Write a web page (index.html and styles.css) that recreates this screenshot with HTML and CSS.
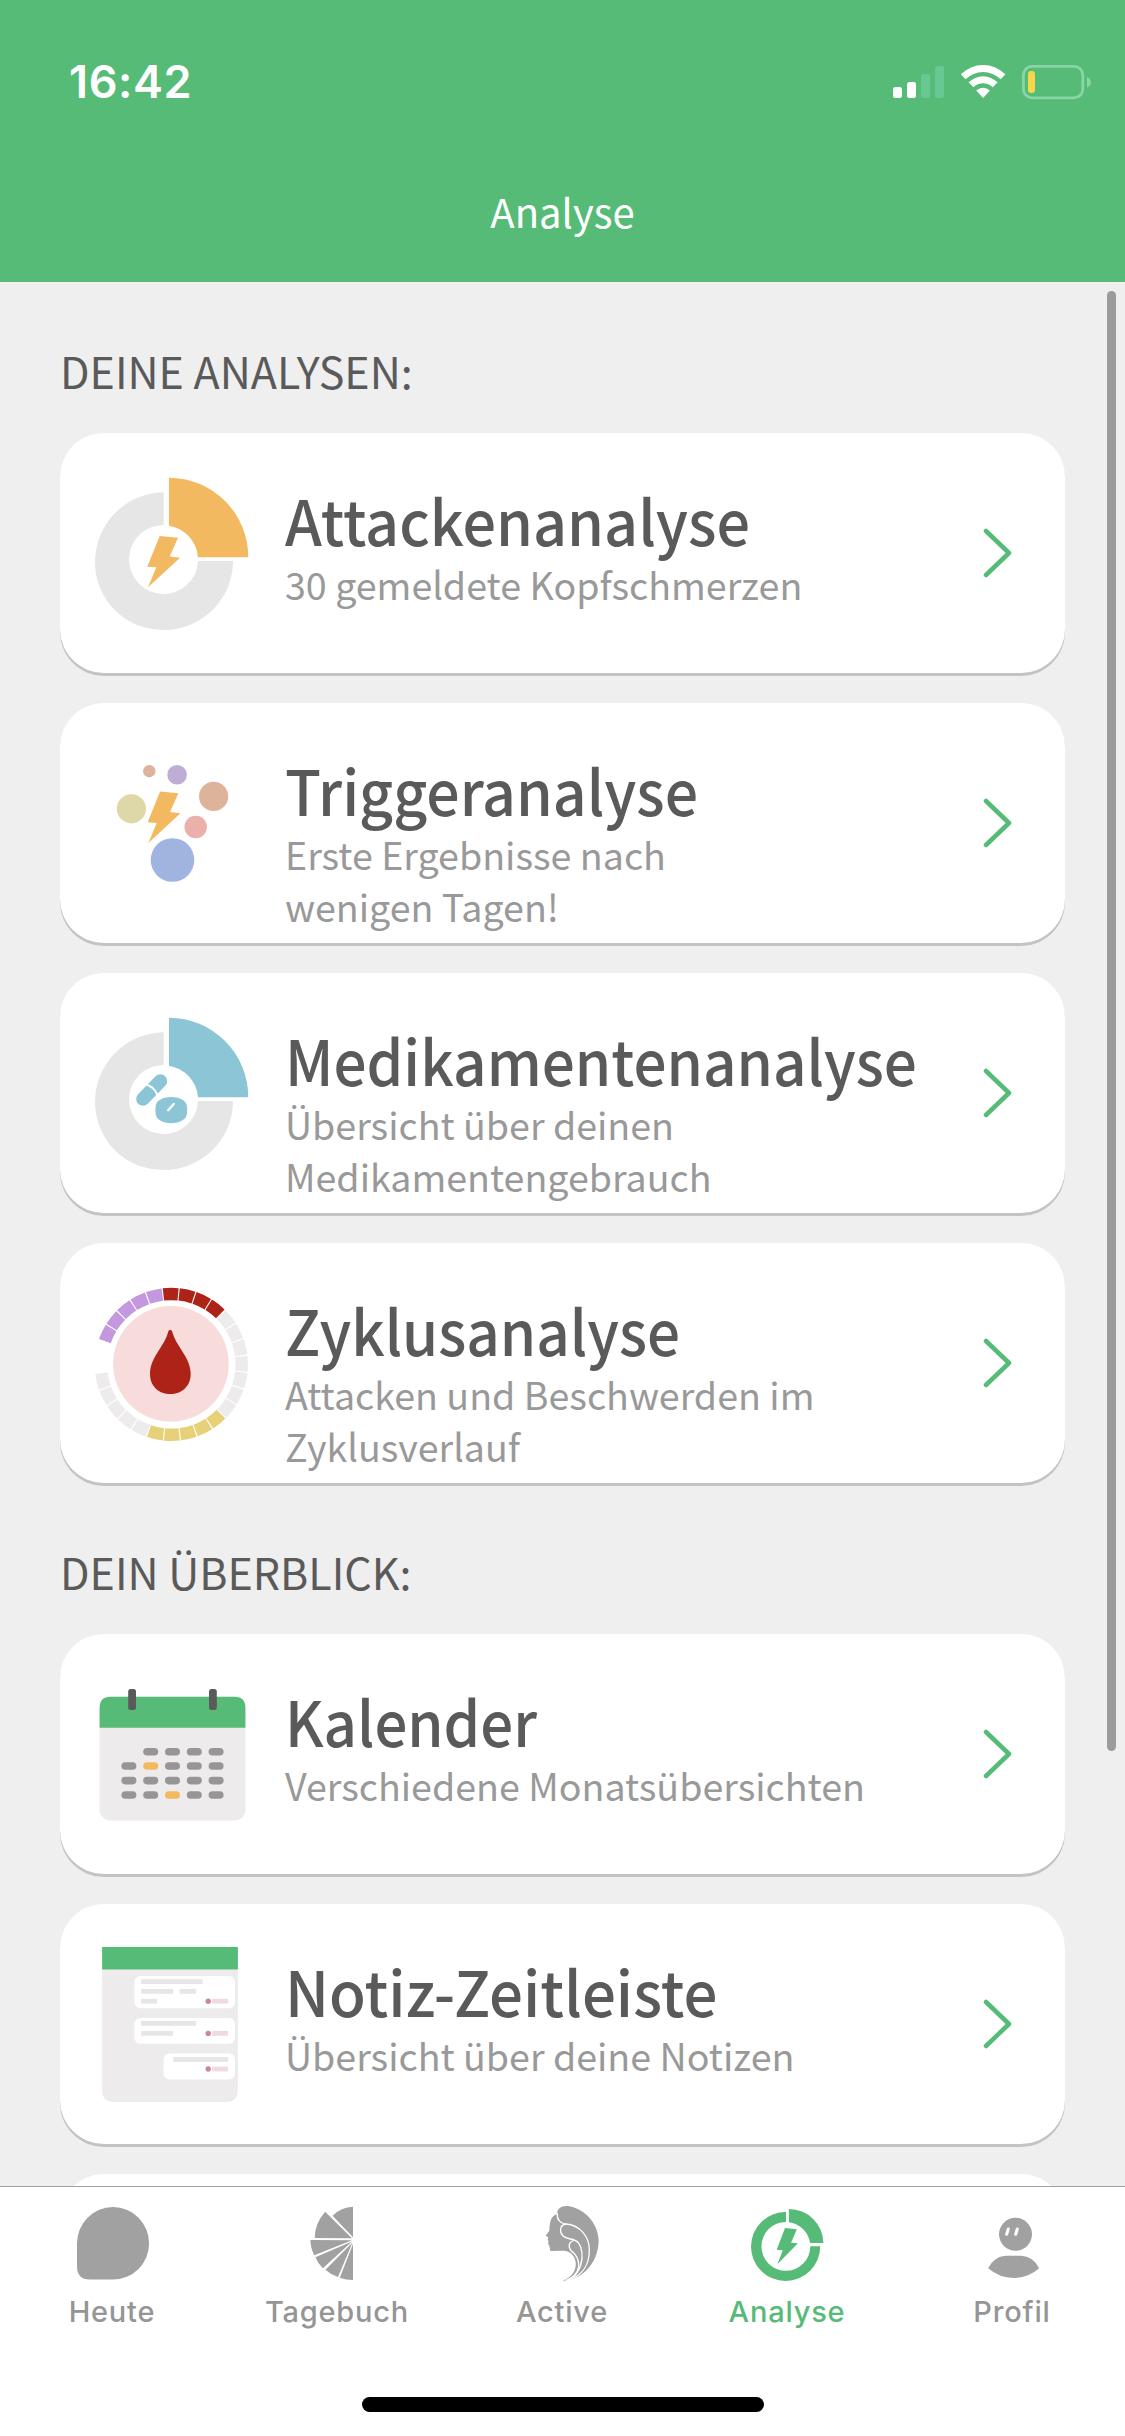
FILE: index.html
```html
<!DOCTYPE html>
<html lang="de">
<head>
<meta charset="utf-8">
<title>Analyse</title>
<link rel="stylesheet" href="styles.css">
</head>
<body>
<svg width="0" height="0" class="defs">
  <defs>
    <path id="ring" d="M103.7 59.3A69 69 0 1 0 173 128H138A34.5 34.5 0 1 1 103.7 92Z"/>
    <path id="slice" d="M109 44.7A79.4 79.6 0 0 1 188.3 124.3H138A34.5 34.5 0 0 0 109 92.7Z"/>
    <path id="bolt" d="M99.7 103L118 104.7L109.7 123.5L120 124.7L88 154.3L96.3 134.3L87.3 133.7Z"/>
    <path id="chevron" d="M3 3L26 25L3 47"/>
    <rect id="day" width="15" height="7.6" rx="3.8"/>
  </defs>
</svg>
<div class="screen">
  <header class="header">
    <div class="status">
      <span class="time">16:42</span>
      <svg class="status-icons" width="201" height="40" viewBox="892 62 201 40">
        <g fill="#fff">
          <rect x="893" y="87" width="9" height="11" rx="2.5"/>
          <rect x="907" y="82" width="9" height="16" rx="2.5"/>
        </g>
        <g fill="#68c892">
          <rect x="921" y="74" width="9" height="24" rx="2.5"/>
          <rect x="935" y="66" width="9" height="32" rx="2.5"/>
        </g>
        <g fill="#fff">
          <path d="M960.8 74.3A31.5 31.5 0 0 1 1005.4 74.3L1000.7 79.3A25 25 0 0 0 965.5 79.3Z"/>
          <path d="M968.6 82.3A20.6 20.6 0 0 1 997.6 82.3L992.8 87.3A13.8 13.8 0 0 0 973.4 87.3Z"/>
          <path d="M976.3 90.6A9.8 9.8 0 0 1 989.9 90.6L983.1 98Z"/>
        </g>
        <rect x="1023.4" y="66.4" width="59.4" height="31.4" rx="8.5" fill="none" stroke="#88d5a5" stroke-width="2.8"/>
        <path d="M1087 77Q1091 79 1091 82.2T1087 87.5Z" fill="#88d5a5"/>
        <rect x="1028" y="71" width="7" height="22" rx="3" fill="#f8d648"/>
      </svg>
    </div>
    <h1 class="header-title">Analyse</h1>
  </header>

  <main class="content">
    <h2 class="section">DEINE ANALYSEN:</h2>
    <div class="cards">
      <article class="card">
        <svg class="card-icon" viewBox="0 0 226 240"><use href="#ring" fill="#e6e6e6"/><use href="#slice" fill="#f3b961"/><use href="#bolt" fill="#f3b961"/></svg>
        <div class="card-text"><h3 class="card-title t1">Attackenanalyse</h3><p class="card-sub">30 gemeldete Kopfschmerzen</p></div>
        <svg class="chevron" viewBox="0 0 30 50"><use href="#chevron"/></svg>
      </article>
      <article class="card">
        <svg class="card-icon" viewBox="0 0 226 240">
          <circle cx="89.3" cy="68.2" r="6.2" fill="#deb39b"/>
          <circle cx="117.1" cy="71.7" r="9.8" fill="#beaed6"/>
          <circle cx="153.6" cy="93.4" r="14.6" fill="#deb39b"/>
          <circle cx="71.4" cy="105.8" r="14.6" fill="#ded7a8"/>
          <circle cx="135.7" cy="124" r="11.2" fill="#ecb0aa"/>
          <circle cx="112.5" cy="157" r="21.8" fill="#9fb5e0"/>
          <use href="#bolt" x=".4" y="-14.4" fill="#f3b961"/>
        </svg>
        <div class="card-text"><h3 class="card-title t2">Triggeranalyse</h3><p class="card-sub">Erste Ergebnisse nach<br>wenigen Tagen!</p></div>
        <svg class="chevron" viewBox="0 0 30 50"><use href="#chevron"/></svg>
      </article>
      <article class="card">
        <svg class="card-icon" viewBox="0 0 226 240">
          <use href="#ring" fill="#e6e6e6"/><use href="#slice" fill="#8cc5d6"/>
          <path d="M82.9 126L100.4 108.1" stroke="#8cc5d6" stroke-width="13.6" stroke-linecap="round"/>
          <path d="M85 111.3Q93.5 113 97.5 122" stroke="#fff" stroke-width="2" fill="none"/>
          <path d="M111.2 124C119 124 124 127 126 130Q127.2 132 127.2 137T126 144C124 147 119 150.2 111.2 150.2S98.4 147 96.6 144Q95.4 142 95.4 137T96.6 130C98.4 127 103.5 124 111.2 124Z" fill="#8cc5d6"/>
          <path d="M108.2 137.2L113.7 131" stroke="#fff" stroke-width="2.4" stroke-linecap="round"/>
        </svg>
        <div class="card-text"><h3 class="card-title t3">Medikamentenanalyse</h3><p class="card-sub">Übersicht über deinen<br>Medikamentengebrauch</p></div>
        <svg class="chevron" viewBox="0 0 30 50"><use href="#chevron"/></svg>
      </article>
      <article class="card">
        <svg class="card-icon" viewBox="0 0 226 240">
          <g fill="none" stroke-width="12.4" transform="translate(111.3 121.4) rotate(-96.43)">
            <circle r="70.4" pathLength="280" stroke="#ae2318" stroke-dasharray="9.3 .7 9.3 .7 9.3 .7 9.3 500"/>
            <circle r="70.4" pathLength="280" stroke="#eeebec" stroke-dasharray="9.3 .7 9.3 .7 9.3 .7 9.3 .7 9.3 .7 9.3 .7 9.3 500" transform="rotate(51.43)"/>
            <circle r="70.4" pathLength="280" stroke="#e6d178" stroke-dasharray="9.3 .7 9.3 .7 9.3 .7 9.3 .7 9.3 500" transform="rotate(141.43)"/>
            <circle r="70.4" pathLength="280" stroke="#eeebec" stroke-dasharray="9.3 .7 9.3 .7 9.3 .7 9.3 .7 9.3 500" transform="rotate(205.71)"/>
            <circle r="70.4" pathLength="280" stroke="#c498de" stroke-dasharray="9.3 .7 9.3 .7 9.3 .7 9.3 .7 9.3 500" transform="rotate(295.71)"/>
          </g>
          <circle cx="110.9" cy="120.9" r="57.8" fill="#f8dbdb"/>
          <path d="M110.2 86.8C112 86.8 112.3 89 113 91C117 104 130.7 115 130.7 131C130.7 143.5 121.5 151 110.3 151S90 143.5 90 131C90 115 103.5 104 107.5 91C108.2 89 108.5 86.8 110.2 86.8Z" fill="#ae2318"/>
        </svg>
        <div class="card-text"><h3 class="card-title t4">Zyklusanalyse</h3><p class="card-sub">Attacken und Beschwerden im<br>Zyklusverlauf</p></div>
        <svg class="chevron" viewBox="0 0 30 50"><use href="#chevron"/></svg>
      </article>
    </div>

    <h2 class="section">DEIN ÜBERBLICK:</h2>
    <div class="cards">
      <article class="card">
        <svg class="card-icon" viewBox="0 0 226 240">
          <rect x="39.6" y="62.7" width="145.8" height="123.7" rx="11" fill="#eeebec"/>
          <path d="M39.6 93.8V73.7Q39.6 62.7 50.6 62.7H174.4Q185.4 62.7 185.4 73.7V93.8Z" fill="#57bb78"/>
          <g fill="#5a5a5a"><rect x="68.2" y="55" width="7.8" height="21" rx="2.5"/><rect x="149" y="55" width="7.8" height="21" rx="2.5"/></g>
          <g fill="#969696">
            <use href="#day" x="83.2" y="114"/><use href="#day" x="105" y="114"/><use href="#day" x="126.8" y="114"/><use href="#day" x="148.6" y="114"/>
            <use href="#day" x="61.4" y="128.2"/><use href="#day" x="83.2" y="128.2" fill="#f3b961"/><use href="#day" x="105" y="128.2"/><use href="#day" x="126.8" y="128.2"/><use href="#day" x="148.6" y="128.2"/>
            <use href="#day" x="61.4" y="142.8"/><use href="#day" x="83.2" y="142.8"/><use href="#day" x="105" y="142.8"/><use href="#day" x="126.8" y="142.8"/><use href="#day" x="148.6" y="142.8"/>
            <use href="#day" x="61.4" y="157.2"/><use href="#day" x="83.2" y="157.2"/><use href="#day" x="105" y="157.2" fill="#f3b961"/><use href="#day" x="126.8" y="157.2"/><use href="#day" x="148.6" y="157.2"/>
          </g>
        </svg>
        <div class="card-text"><h3 class="card-title t5">Kalender</h3><p class="card-sub">Verschiedene Monatsübersichten</p></div>
        <svg class="chevron" viewBox="0 0 30 50"><use href="#chevron"/></svg>
      </article>
      <article class="card">
        <svg class="card-icon" viewBox="0 0 226 240">
          <path d="M42.1 65H177.9V186Q177.9 198 165.9 198H54.1Q42.1 198 42.1 186Z" fill="#eeebec"/>
          <path d="M42.1 43H177.9V65.4H42.1Z" fill="#57bb78"/>
          <g fill="#fff"><rect x="74.3" y="71.9" width="100.7" height="32.3" rx="6"/><rect x="74.3" y="114" width="100.7" height="25.8" rx="6"/><rect x="103.6" y="149.5" width="71.4" height="26.1" rx="6"/></g>
          <g fill="#e6e6e6">
            <rect x="81.1" y="75.2" width="61.4" height="4.8"/><rect x="81.1" y="85" width="32" height="4.8"/><rect x="119.6" y="85" width="16.4" height="4.8"/><rect x="81.1" y="94.8" width="16" height="4.8"/>
            <rect x="81.1" y="117" width="55" height="4.8"/><rect x="81.1" y="127" width="32" height="4.8"/><rect x="113.2" y="153.1" width="55" height="4.8"/>
          </g>
          <g fill="#f0dae2"><rect x="152.1" y="94.8" width="16" height="4.8"/><rect x="152.1" y="127" width="16" height="4.8"/><rect x="152.1" y="162.6" width="16" height="4.8"/></g>
          <g fill="#cf82aa"><circle cx="148.2" cy="97.2" r="2.7"/><circle cx="148.2" cy="129.4" r="2.7"/><circle cx="148.2" cy="165" r="2.7"/></g>
        </svg>
        <div class="card-text"><h3 class="card-title t6">Notiz-Zeitleiste</h3><p class="card-sub">Übersicht über deine Notizen</p></div>
        <svg class="chevron" viewBox="0 0 30 50"><use href="#chevron"/></svg>
      </article>
      <article class="card"></article>
    </div>
    <div class="scrollbar"></div>
  </main>

  <nav class="tabs">
    <a class="tab">
      <svg class="tab-icon" viewBox="0 0 225 106"><path d="M113 20A36.1 36.3 0 0 1 113 92.6H90Q77 92.6 77 79.6V56.3A36 36.3 0 0 1 113 20Z"/></svg>
      <span class="tab-label">Heute</span>
    </a>
    <a class="tab">
      <svg class="tab-icon" viewBox="0 0 225 106">
        <path d="M128 19.7V50.3L107.6 28.7Q116 20 128 19.7ZM100.1 24.7L127 51.3L89.7 51Q89.5 37 100.1 24.7ZM85.4 53L127 53.3L89.3 68.3Q85.5 61 85.4 53ZM90.4 70.3L127 54.5L97.9 81.3Q92.8 76.5 90.4 70.3ZM100.4 82.7L127.5 55.5L113 90Q105.5 87.5 100.4 82.7ZM114.8 90.7L128 57V93Q121 93 114.8 90.7Z"/>
      </svg>
      <span class="tab-label">Tagebuch</span>
    </a>
    <a class="tab">
      <svg class="tab-icon" viewBox="0 0 225 106">
        <g transform="translate(80 8) scale(.33333)">
          <path d="M82 57C80 40 95 32 112 33C168 40 207 90 206 140C203 210 150 257 97 257C125 250 140 225 137 202C134 180 118 167 100 167L62 168C58 161 61 156 57 151L54 145L56 140L53 134L55 127L47 122L58 107C59 88 60 62 82 57Z"/>
          <g fill="none" stroke="#fff" stroke-width="4">
            <path d="M82 55C80 74 91 86 108 87C150 90 178 125 178 165C178 205 160 240 118 254"/>
            <path d="M108 87C88 90 87 113 102 125C115 134 125 130 135 136C151 142 158 168 156 190C153 220 140 242 114 255"/>
            <path d="M135 136C117 138 113 153 123 167C139 178 147 195 146 215C143 235 130 249 108 256"/>
          </g>
        </g>
      </svg>
      <span class="tab-label">Active</span>
    </a>
    <a class="tab active">
      <svg class="tab-icon" viewBox="0 0 225 106">
        <path d="M111 25A34.6 34.5 0 1 0 145.2 59.3H135.3A24.4 24.4 0 1 1 111 35ZM113.9 22A34.5 34.3 0 0 1 148.4 56H135.1A24.5 24.5 0 0 0 113.9 35.3ZM110 41L121.8 42.3L116.1 55.7L122.9 56.3L102.4 77.3L107.8 63.3L101.7 62.7Z"/>
      </svg>
      <span class="tab-label">Analyse</span>
    </a>
    <a class="tab">
      <svg class="tab-icon" viewBox="0 0 225 106">
        <circle cx="115.5" cy="47.3" r="16.5"/>
        <path d="M88.2 81.3Q94.5 68.7 107.2 68.7H121Q133 69 139.2 81.3Q128 91 113.7 91T88.2 81.3Z"/>
        <path d="M108.3 42L106.7 47.2M117.3 42L115.7 47.2" stroke="#fff" stroke-width="3" stroke-linecap="round"/>
      </svg>
      <span class="tab-label">Profil</span>
    </a>
    <div class="home"></div>
  </nav>
</div>
</body>
</html>
```
FILE: styles.css
```css
* { box-sizing: border-box; margin: 0; padding: 0; }
body { background: #fff; }
.defs { position: absolute; }
.screen {
  width: 1125px; height: 2436px; overflow: hidden;
  display: flex; flex-direction: column;
  font-family: "Noto Sans CJK SC", "Open Sans", sans-serif;
}
.header { height: 282px; flex: none; background: #57bb78; color: #fff; }
.status {
  height: 181px; padding: 52px 32px 0 69px;
  display: flex; justify-content: space-between; align-items: flex-start;
}
.time { font: 600 45px/60px Inter, sans-serif; letter-spacing: 0.6px; }
.status-icons { margin-top: 10px; }
.header-title { font-size: 40px; font-weight: 400; line-height: 60px; text-align: center; }

.content { position: relative; height: 1904px; flex: none; overflow: hidden; background: #efefef; padding: 0 60px; }
.section {
  margin-top: 58px; height: 60px; line-height: 60px;
  font-size: 43px; font-weight: 400; color: #5a5a5a;
}
.cards { display: flex; flex-direction: column; gap: 30px; padding-top: 33px; }
.card {
  height: 240px; flex: none; display: flex;
  background: #fff; border-radius: 44px; box-shadow: 0 3px 0 #c3c3c3;
}
.card-icon { width: 226px; height: 240px; flex: none; }
.card-text { flex: 1; padding-top: 50px; white-space: nowrap; margin-left: -1px; margin-right: 1px; }
.card-title {
  font-size: 62px; font-weight: 500; line-height: 72px; color: #5a5a5a;
  transform-origin: left center;
}
.t1 { transform: scaleX(0.956); }
.t2 { transform: scaleX(0.951); }
.t3 { transform: scaleX(0.942); }
.t4 { transform: scaleX(0.941); }
.t5 { transform: scaleX(0.938); }
.t6 { transform: scaleX(0.968); }
.card-sub { margin-top: 3px; font-size: 37.6px; line-height: 52px; color: #999; }
.chevron {
  width: 30px; height: 50px; margin: 95px 52px 0 0; flex: none;
  fill: none; stroke: #57bb78; stroke-width: 4.5; stroke-linecap: round; stroke-linejoin: round;
}
.scrollbar {
  position: absolute; right: 9px; top: 9px; width: 9px; height: 1460px;
  border-radius: 4.5px; background: #9b9b9b;
}

.tabs {
  position: relative; height: 250px; flex: none; display: flex;
  border-top: 1px solid #a0a0a0; background: #fff; color: #959595;
}
.tab { width: 225px; display: flex; flex-direction: column; align-items: center; }
.tab-icon { width: 225px; height: 106px; fill: #a1a1a1; }
.tab-label { font: 500 29px/36px Inter, sans-serif; letter-spacing: 0.8px; padding-top: 1px; margin-left: -1px; }
.active { color: #57bb78; }
.active .tab-icon { fill: #57bb78; }
.home {
  position: absolute; left: 362px; top: 210px; width: 402px; height: 15px;
  border-radius: 7.5px; background: #000;
}
```
